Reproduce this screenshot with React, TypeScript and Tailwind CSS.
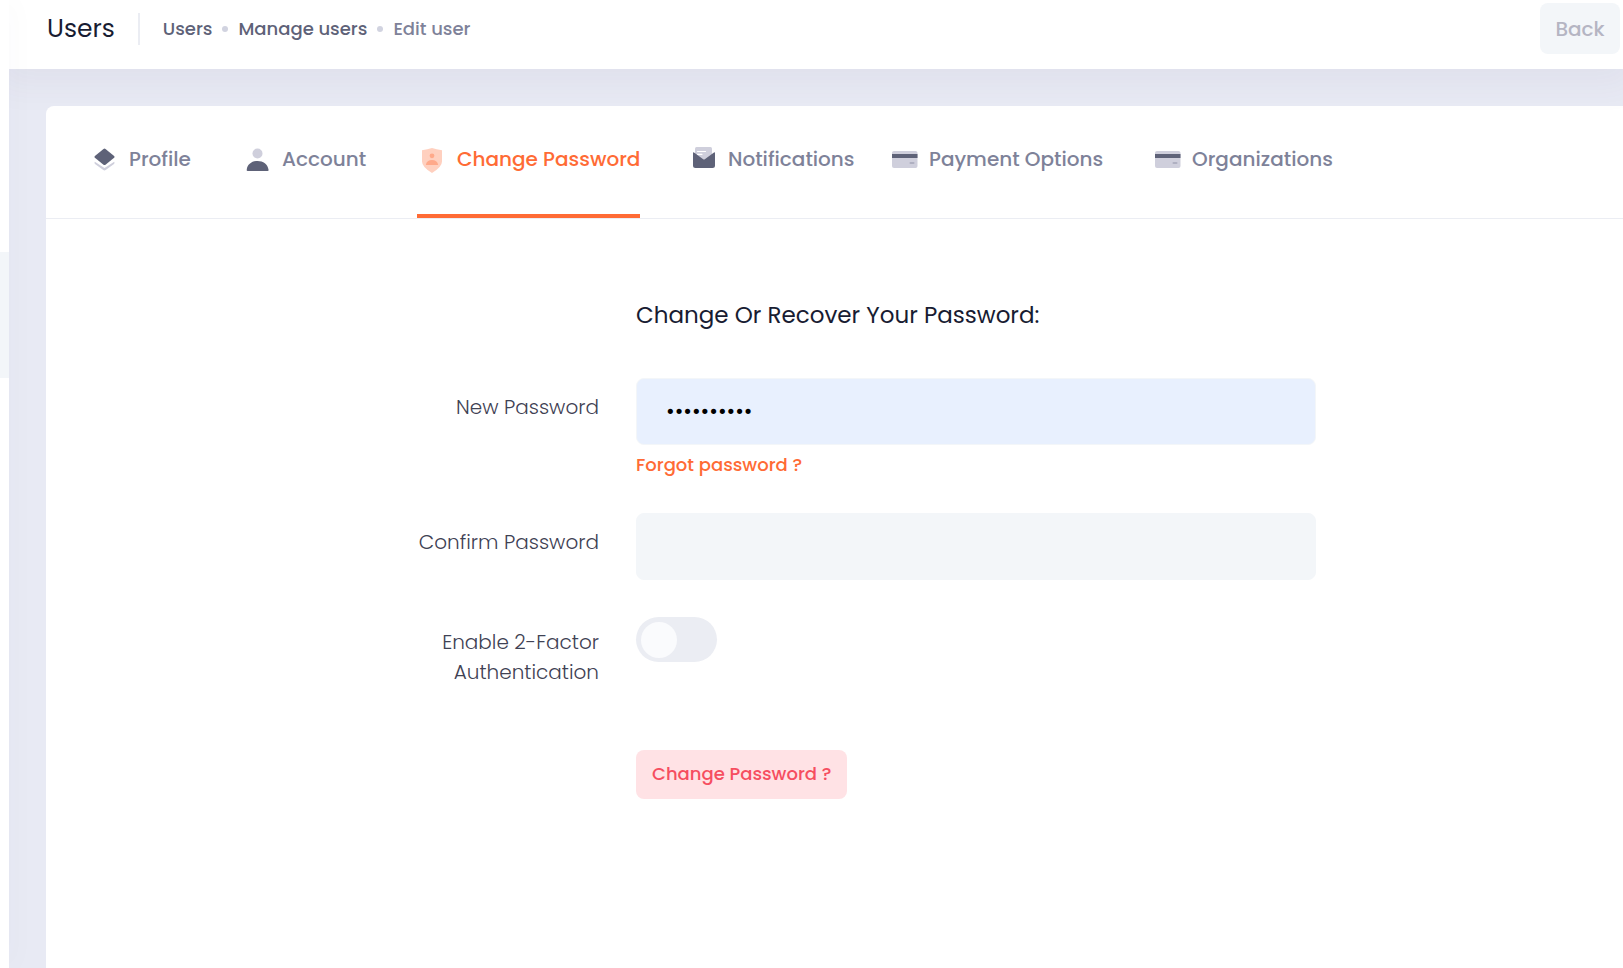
import React, { useState } from 'react';

function LayersIcon() {
  return (
    <svg width="30" height="30" viewBox="0 0 30 30" aria-hidden="true">
      <path d="M6 19.900q-1-1-.2-2.200l9.700 6.400 9.700-6.400q.8 1.200-.2 2.200l-8.300 6.200q-1.200.9-2.400 0z" fill="#cfcfdc" />
      <path d="M14.500 4.900q1-.8 2 0l8.600 7.100q1 .9 0 1.800l-8.600 6.900q-1 .8-2 0l-8.600-6.900q-1-.9 0-1.800z" fill="#5e6278" />
    </svg>
  );
}

function PersonIcon() {
  return (
    <svg width="30" height="30" viewBox="0 0 30 30" aria-hidden="true">
      <circle cx="15.500" cy="9.500" r="5" fill="#cfcfdc" />
      <path d="M4.700 26q-.2 1 1 1h19.900q1.200 0 1-1c-.8-6-5.500-9-11-9s-10.300 3-10.900 9z" fill="#5e6278" />
    </svg>
  );
}

function ShieldIcon() {
  return (
    <svg width="30" height="30" viewBox="0 0 30 30" aria-hidden="true">
      <path d="M5 6.200Q10.500 5.500 15 4q4.500 1.500 10 2.200v11.300q0 5.500-10 11.500Q5 23 5 17.500z" fill="#ffd0bf" />
      <circle cx="15" cy="11.800" r="2.400" fill="#ffa98a" />
      <path d="M8.800 20.900c.5-3.300 3-4.900 6.200-4.900s5.700 1.600 6.200 4.900z" fill="#ffa98a" />
    </svg>
  );
}

function MailIcon() {
  return (
    <svg width="30" height="30" viewBox="0 0 30 30" aria-hidden="true">
      <path d="M7 4.500q0-1.500 1.500-1.500h14q1.500 0 1.500 1.500V18H7z" fill="#cfcfdc" />
      <path d="M9.500 7.500h8M9.500 10.300h4.500" stroke="#fff" strokeWidth="1.200" strokeLinecap="round" />
      <path d="M5 9q0-1.200 1-.5l9.200 6.700q.8.600 1.600 0L26 8.500q1-.7 1 .5v12.500q0 2.500-2.500 2.500h-17Q5 24 5 21.500z" fill="#5e6278" />
    </svg>
  );
}

function CardIcon() {
  return (
    <svg width="30" height="30" viewBox="0 0 30 30" aria-hidden="true">
      <rect x="3" y="7" width="25.500" height="17" rx="2" fill="#cfcfdc" />
      <rect x="3" y="10" width="25.500" height="4" fill="#5e6278" />
      <rect x="20.500" y="18" width="5" height="2" rx="1" fill="#afb0c1" />
    </svg>
  );
}

const tabs = [
  { label: 'Profile', icon: <LayersIcon />, size: 'min-w-[153px]' },
  { label: 'Account', icon: <PersonIcon />, size: 'min-w-[175px]' },
  { label: 'Change Password', icon: <ShieldIcon />, size: 'min-w-[271px]' },
  { label: 'Notifications', icon: <MailIcon />, size: 'min-w-[201px]' },
  { label: 'Payment Options', icon: <CardIcon />, size: 'min-w-[263px]' },
  { label: 'Organizations', icon: <CardIcon />, size: 'min-w-[177px]' },
];

const rowClass = 'grid grid-cols-[553fr_680fr_270fr] gap-x-[37px]';
const labelClass = 'justify-self-end text-right text-[20px] font-light leading-[30px] text-[#3f4254]';
const inputClass = 'block h-[67px] w-full rounded-lg border border-[#f3f6f9] px-[29px] text-[21px] text-black outline-none';

export default function App() {
  const [active, setActive] = useState('Change Password');
  const [password, setPassword] = useState('password12');
  const [confirm, setConfirm] = useState('');

  return (
    <div className="flex min-h-screen overflow-x-hidden bg-[#e8eaf4] font-[Poppins,Inter,sans-serif]">
      <aside className="relative z-20 w-[9px] shrink-0 bg-white pt-[252px] shadow-[0_0_28px_rgba(82,63,105,0.05)]">
        <div className="h-[126px] bg-[#f3f6f9]" />
      </aside>

      <div className="flex min-w-0 grow flex-col">
        <header className="relative z-10 flex h-[69px] shrink-0 items-start justify-between bg-white pl-[38px] pr-[3px] pt-[3px] shadow-[0_4px_36px_12px_rgba(82,63,105,0.05)]">
          <div className="flex h-[51px] items-center">
            <h1 className="text-[25px] leading-none text-[#181c32]">Users</h1>
            <div className="mx-[23px] h-8 w-[2px] bg-[#ebedf3]" />
            <nav aria-label="Breadcrumb" className="flex items-center gap-[10px] text-[18px] font-medium leading-none">
              <a href="#users" className="text-[#5e6278]">Users</a>
              <span className="size-[6px] rounded-full bg-[#d1d3e0]" />
              <a href="#manage" className="text-[#5e6278]">Manage users</a>
              <span className="size-[6px] rounded-full bg-[#d1d3e0]" />
              <a href="#edit" className="text-[#7e8299]">Edit user</a>
            </nav>
          </div>
          <button type="button" className="h-[51px] w-20 rounded-lg bg-[#f3f6f9] text-[20px] font-medium text-[#b5b5c3]">
            Back
          </button>
        </header>

        <main className="flex grow flex-col pl-[37px] pt-[37px]">
          <section className="grow rounded-tl-lg bg-white">
            <nav className="flex h-[113px] border-b border-[#ebedf3] pl-[43px]">
              {tabs.map((tab) => (
                <div key={tab.label} className={'flex shrink-0 ' + tab.size}>
                  <button
                    type="button"
                    onClick={() => setActive(tab.label)}
                    className={
                      'flex h-full gap-[10px] border-b-4 pt-[38px] text-[20px] font-medium leading-[30px] ' +
                      (tab.label === active ? 'border-[#ff6b35] text-[#ff6b35]' : 'border-transparent text-[#7e8299]')
                    }
                  >
                    {tab.icon}
                    {tab.label}
                  </button>
                </div>
              ))}
            </nav>

            <form className="pt-20" onSubmit={(e) => e.preventDefault()}>
              <div className={rowClass}>
                <h2 className="col-start-2 whitespace-nowrap text-[23px] leading-8 text-[#181c32]">
                  Change Or Recover Your Password:
                </h2>
              </div>

              <div className={rowClass + ' mt-[47px]'}>
                <label htmlFor="new-password" className={labelClass + ' pt-[14px]'}>New Password</label>
                <div>
                  <input
                    id="new-password"
                    type="password"
                    value={password}
                    onChange={(e) => setPassword(e.target.value)}
                    className={inputClass + ' bg-[#e8f0fe]'}
                  />
                  <a href="#forgot" className="mt-[6px] block w-fit text-[18px] font-medium leading-[28px] text-[#ff6b35]">
                    Forgot password ?
                  </a>
                </div>
              </div>

              <div className={rowClass + ' mt-[34px]'}>
                <label htmlFor="confirm-password" className={labelClass + ' pt-[14px]'}>Confirm Password</label>
                <input
                  id="confirm-password"
                  type="password"
                  value={confirm}
                  onChange={(e) => setConfirm(e.target.value)}
                  className={inputClass + ' bg-[#f3f6f9]'}
                />
              </div>

              <div className={rowClass + ' mt-[37px]'}>
                <label htmlFor="two-factor" className={labelClass + ' max-w-[200px] pt-[10px]'}>
                  Enable 2-Factor Authentication
                </label>
                <input
                  id="two-factor"
                  type="checkbox"
                  role="switch"
                  className="flex h-[45px] w-[81px] cursor-pointer appearance-none items-center rounded-full bg-[#ebedf3] px-[5px] before:size-9 before:rounded-full before:bg-[#fafbfd] checked:justify-end checked:bg-[#ff6b35]"
                />
              </div>

              <div className={rowClass + ' mt-[63px]'}>
                <button
                  type="submit"
                  className="col-start-2 h-[49px] justify-self-start whitespace-nowrap rounded-lg bg-[#ffe2e5] px-4 pb-[2px] text-[18px] font-medium text-[#f64e60]"
                >
                  Change Password ?
                </button>
              </div>
            </form>
          </section>
        </main>
      </div>
    </div>
  );
}
